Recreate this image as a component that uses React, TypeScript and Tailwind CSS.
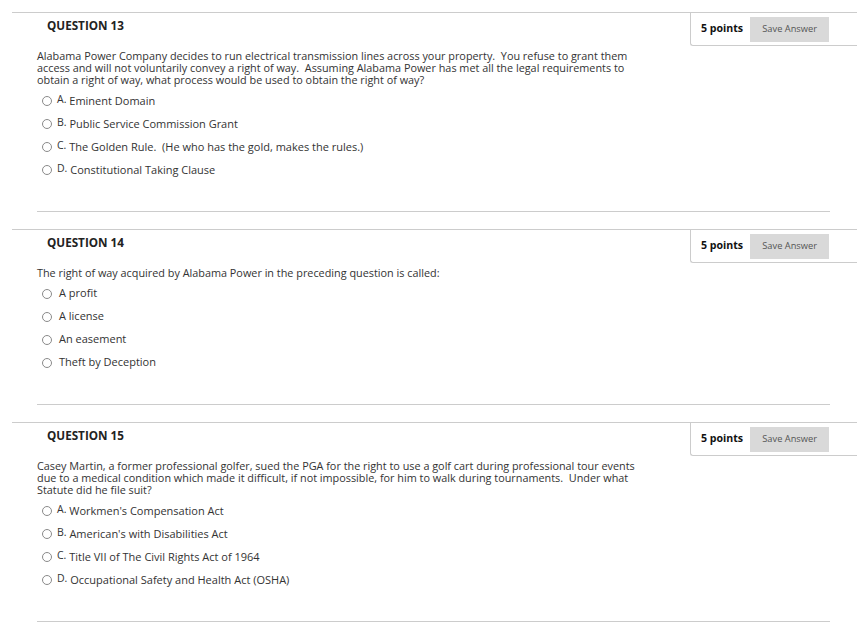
import React from "react";

type Question = {
  num: number;
  text: string[];
  lettered: boolean;
  options: string[];
};

const QUESTIONS: Question[] = [
  {
    num: 13,
    text: [
      "Alabama Power Company decides to run electrical transmission lines across your property.\u00a0 You refuse to grant them",
      "access and will not voluntarily convey a right of way.\u00a0 Assuming Alabama Power has met all the legal requirements to",
      "obtain a right of way, what process would be used to obtain the right of way?",
    ],
    lettered: true,
    options: [
      "Eminent Domain",
      "Public Service Commission Grant",
      "The Golden Rule.\u00a0 (He who has the gold, makes the rules.)",
      "Constitutional Taking Clause",
    ],
  },
  {
    num: 14,
    text: ["The right of way acquired by Alabama Power in the preceding question is called:"],
    lettered: false,
    options: ["A profit", "A license", "An easement", "Theft by Deception"],
  },
  {
    num: 15,
    text: [
      "Casey Martin, a former professional golfer, sued the PGA for the right to use a golf cart during professional tour events",
      "due to a medical condition which made it difficult, if not impossible, for him to walk during tournaments.\u00a0 Under what",
      "Statute did he file suit?",
    ],
    lettered: true,
    options: [
      "Workmen's Compensation Act",
      "American's with Disabilities Act",
      "Title VII of The Civil Rights Act of 1964",
      "Occupational Safety and Health Act (OSHA)",
    ],
  },
];

const LETTERS = ["A.", "B.", "C.", "D."];

function QuestionBlock({ q }: { q: Question }) {
  return (
    <section className="ml-3 border-t border-[#cccccc]">
      <div className="flex items-start justify-between">
        <h3 className="pl-[35px] pt-[4px] text-[11.7px] font-bold leading-[16px] text-[#222]">
          QUESTION {q.num}
        </h3>
        <div className="flex h-[33px] w-[167px] items-center rounded-bl-[3px] border-b border-l border-[#cccccc] pl-[10px]">
          <span className="text-[10.6px] font-bold text-[#111]">5 points</span>
          <button
            type="button"
            className="ml-[7px] h-[25px] w-[79px] bg-[#d9d9d9] text-[9.3px] text-[#555]"
          >
            Save Answer
          </button>
        </div>
      </div>
      <div className="pl-[25px]">
        <div className="mt-[4px] text-[10.85px] leading-[12px] text-[#333]">
          {q.text.map((line) => (
            <div key={line} className="whitespace-pre">
              {line}
            </div>
          ))}
        </div>
        <ul className="mt-[3px]">
          {q.options.map((opt, i) => (
            <li key={opt} className="flex h-[23px] items-center text-[11px] text-[#333]">
              <span className="ml-[5px] h-[10px] w-[10px] rounded-full border border-[#8a8a8a] bg-white" />
              {q.lettered ? (
                <span className="ml-[5px]">
                  <span className="align-[2px] text-[10.5px]">{LETTERS[i]}</span>{" "}
                  {opt}
                </span>
              ) : (
                <span className="ml-[7px]">{opt}</span>
              )}
            </li>
          ))}
        </ul>
        <div className="mr-[27px] mt-[30px] mb-[17px] border-t border-[#cccccc]" />
      </div>
    </section>
  );
}

export default function App() {
  return (
    <div
      className="min-h-[638px] w-[857px] bg-white pt-[12px]"
      style={{ fontFamily: '"Open Sans", "Noto Sans", sans-serif' }}
    >
      {QUESTIONS.map((q) => (
        <QuestionBlock key={q.num} q={q} />
      ))}
    </div>
  );
}
